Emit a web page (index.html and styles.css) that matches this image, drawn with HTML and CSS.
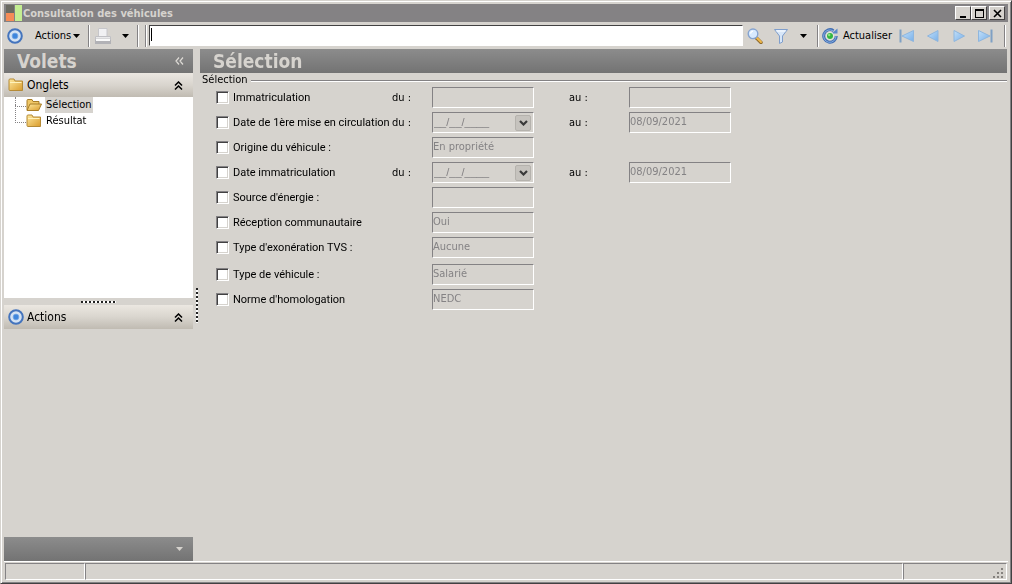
FILE: index.html
```html
<!DOCTYPE html>
<html lang="fr">
<head>
    <meta charset="UTF-8">
    <meta name="viewport" content="width=device-width, initial-scale=1.0">
    <title>Consultation des véhicules</title>
    <link rel="stylesheet" href="styles.css">
</head>
<body>
    <svg class="defs" aria-hidden="true">
        <defs>
            <linearGradient id="gold" x1="0" y1="0" x2="1" y2="1">
                <stop offset="0" stop-color="#ffeaa0"/>
                <stop offset="1" stop-color="#d99b2b"/>
            </linearGradient>
            <linearGradient id="blue" x1="0" y1="0" x2="1" y2="1">
                <stop offset="0" stop-color="#c4e0f8"/>
                <stop offset="1" stop-color="#78b0ea"/>
            </linearGradient>
            <linearGradient id="paper" x1="0" y1="0" x2="0" y2="1">
                <stop offset="0" stop-color="#fafafa"/>
                <stop offset="1" stop-color="#b4b4b8"/>
            </linearGradient>
            <symbol id="target" viewBox="0 0 16 16">
                <circle cx="8" cy="8" r="6.8" fill="#d5e3f3" stroke="#4474bd" stroke-width="2"/>
                <circle cx="8" cy="8" r="2.9" fill="#3f86dc" stroke="#79aae5" stroke-width=".8"/>
            </symbol>
            <symbol id="folder" viewBox="0 0 16 16">
                <path d="M1 3q0-1 1-1h4l1 2h7.500v9.500h-12.500q-1 0-1-1z" fill="url(#gold)" stroke="#b58a35"/>
                <path d="M2 5.500h11.500" stroke="#fff3bd"/>
            </symbol>
            <symbol id="folder-open" viewBox="0 0 16 16">
                <path d="M1 13V3.500q0-1 1-1h4l1 2h6v3" fill="#efc767" stroke="#a87d27"/>
                <path d="M1 13.500l3-6.500h11.500l-3 6.500z" fill="url(#gold)" stroke="#a87d27"/>
            </symbol>
            <symbol id="chevrons" viewBox="0 0 9 9">
                <path d="M1 4.500l3.500-3.500 3.500 3.500M1 8.500l3.500-3.500 3.500 3.500" fill="none" stroke="#000" stroke-width="1.500"/>
            </symbol>
            <symbol id="caret" viewBox="0 0 7 4">
                <path d="M0 0h7l-3.500 4z" fill="currentColor"/>
            </symbol>
            <symbol id="prev" viewBox="0 0 16 16">
                <path d="M13 2.500v11l-10.500-5.500z" fill="url(#blue)" stroke="#8fb6de"/>
            </symbol>
            <symbol id="next" viewBox="0 0 16 16">
                <path d="M3 2.500v11l10.500-5.500z" fill="url(#blue)" stroke="#8fb6de"/>
            </symbol>
            <symbol id="first" viewBox="0 0 16 16">
                <path d="M14.500 2.500v11l-11.500-5.500z" fill="url(#blue)" stroke="#8fb6de"/>
                <path d="M1.500 1.500v13" stroke="#7fa0c4" stroke-width="2"/>
            </symbol>
            <symbol id="last" viewBox="0 0 16 16">
                <path d="M1.500 2.500v11l11.500-5.500z" fill="url(#blue)" stroke="#8fb6de"/>
                <path d="M14.500 1.500v13" stroke="#7fa0c4" stroke-width="2"/>
            </symbol>
        </defs>
    </svg>

    <div class="window">
        <header class="titlebar">
            <svg class="logo" viewBox="0 0 16 16" aria-hidden="true">
                <path d="M0 0h8v8h-8z" fill="#6b6b62"/>
                <path d="M0 8h8v8h-8z" fill="#f58c57"/>
                <path d="M9 0h7v16h-7z" fill="#c4ee92"/>
            </svg>
            <h1 class="title">Consultation des véhicules</h1>
            <div class="window-buttons">
                <button class="win-btn" aria-label="Réduire">
                    <svg viewBox="0 0 11 9"><path d="M2 7h6v2h-6z"/></svg>
                </button>
                <button class="win-btn" aria-label="Agrandir">
                    <svg viewBox="0 0 11 9"><path d="M1 0h9v9h-9zM2 2v6h7v-6z" fill-rule="evenodd"/></svg>
                </button>
                <button class="win-btn close" aria-label="Fermer">
                    <svg viewBox="0 0 11 9"><path d="M2 1l7 7M9 1l-7 7" stroke="#000" stroke-width="1.600"/></svg>
                </button>
            </div>
        </header>

        <div class="toolbar">
            <svg class="icon" aria-hidden="true"><use href="#target"/></svg>
            <button class="tool actions">Actions<svg class="caret" aria-hidden="true"><use href="#caret"/></svg></button>
            <span class="sep"></span>
            <button class="tool printer" aria-label="Imprimer">
                <svg class="icon-print" viewBox="0 0 18 18">
                    <path d="M4.500 1.500h8.500v8h-8.500z" fill="#f1f1f3" stroke="#c6c6ca"/>
                    <path d="M1.500 9.500h15v4h-15z" fill="url(#paper)" stroke="#c0c0c4"/>
                    <path d="M1 13h16v4h-16z" fill="#b2b2b6"/>
                    <path d="M2 12h14v2h-14z" fill="#fafafa"/>
                </svg>
            </button>
            <button class="tool" aria-label="Options d'impression"><svg class="caret" aria-hidden="true"><use href="#caret"/></svg></button>
            <span class="sep before-search"></span>
            <span class="sep"></span>
            <input class="search" type="text" aria-label="Rechercher" autofocus>
            <button class="tool" aria-label="Rechercher">
                <svg class="icon" viewBox="0 0 16 16">
                    <path d="M9.500 10l4.500 4.500" stroke="#8f6a2c" stroke-width="3.400" stroke-linecap="round"/>
                    <path d="M10 10l4 4" stroke="#f0b94c" stroke-width="2" stroke-linecap="round"/>
                    <circle cx="6" cy="5.800" r="4.800" fill="#d8eafe" stroke="#85a3d0" stroke-width="1.400"/>
                    <path d="M3.500 5.500q.5-2 2.500-2.300" fill="none" stroke="#fff" stroke-width="1.300"/>
                </svg>
            </button>
            <button class="tool filter" aria-label="Filtrer">
                <svg class="icon" viewBox="0 0 16 16">
                    <path d="M1.500 1.500h13l-5 6.500v6l-3 1.500v-7.500z" fill="#d7e6f8" stroke="#7f9ecc"/>
                    <path d="M3.500 3h9" stroke="#fff"/>
                </svg>
            </button>
            <button class="tool filter-menu" aria-label="Options du filtre"><svg class="caret" aria-hidden="true"><use href="#caret"/></svg></button>
            <span class="sep"></span>
            <button class="tool refresh">
                <svg class="icon" viewBox="0 0 16 16" aria-hidden="true">
                    <path d="M11.500 2.700a6.300 6.300 0 1 0 2.800 5.300" fill="none" stroke="#4470b4" stroke-width="3"/>
                    <path d="M11.300 3a6.200 6.200 0 1 0 2.700 5" fill="none" stroke="#86addf"/>
                    <path d="M9.500 5.500h6v-5z" fill="#5b87c8"/>
                    <circle cx="8" cy="8" r="3.800" fill="#e3efe4"/>
                    <circle cx="8" cy="8" r="3" fill="#33b540"/>
                    <circle cx="7.200" cy="7" r="1.200" fill="#92e287"/>
                </svg>
                Actualiser
            </button>
            <div class="nav">
                <button class="tool" aria-label="Premier"><svg class="icon"><use href="#first"/></svg></button>
                <button class="tool" aria-label="Précédent"><svg class="icon"><use href="#prev"/></svg></button>
                <button class="tool" aria-label="Suivant"><svg class="icon"><use href="#next"/></svg></button>
                <button class="tool" aria-label="Dernier"><svg class="icon"><use href="#last"/></svg></button>
            </div>
            <span class="sep"></span>
        </div>

        <div class="content">
            <aside class="sidebar">
                <div class="band">
                    <h2>Volets</h2>
                    <button class="band-btn" aria-label="Masquer les volets">
                        <svg width="9" height="8" viewBox="0 0 9 8"><path d="M4 .5l-3 3.500 3 3.500M8 .5l-3 3.500 3 3.500" fill="none" stroke="#dedbd6" stroke-width="1.200"/></svg>
                    </button>
                </div>
                <button class="panel-head">
                    <svg class="icon" aria-hidden="true"><use href="#folder"/></svg>
                    <span>Onglets</span>
                    <svg class="chevrons" aria-hidden="true"><use href="#chevrons"/></svg>
                </button>
                <ul class="tree">
                    <li><a href="#selection" class="selected"><svg class="icon" aria-hidden="true"><use href="#folder-open"/></svg><span>Sélection</span></a></li>
                    <li><a href="#resultat"><svg class="icon" aria-hidden="true"><use href="#folder"/></svg><span>Résultat</span></a></li>
                </ul>
                <div class="grip-row"><span class="grip"></span></div>
                <button class="panel-head">
                    <svg class="icon" aria-hidden="true"><use href="#target"/></svg>
                    <span>Actions</span>
                    <svg class="chevrons" aria-hidden="true"><use href="#chevrons"/></svg>
                </button>
                <div class="band bottom">
                    <button class="band-btn" aria-label="Autres volets"><svg class="caret" aria-hidden="true"><use href="#caret"/></svg></button>
                </div>
            </aside>

            <div class="splitter"><span class="grip vertical"></span></div>

            <main class="main" id="selection">
                <div class="band"><h2>Sélection</h2></div>
                <fieldset class="criteria">
                    <legend>Sélection</legend>
                    <div class="group">
                        <div class="row">
                            <label class="check"><input type="checkbox">Immatriculation</label>
                            <label for="immat-du">du :</label>
                            <input class="field" id="immat-du" type="text" disabled>
                            <label class="to" for="immat-au">au :</label>
                            <input class="field" id="immat-au" type="text" disabled>
                        </div>
                        <div class="row">
                            <label class="check"><input type="checkbox">Date de 1ère mise en circulation</label>
                            <label for="circ-du">du :</label>
                            <div class="field date">
                                <input id="circ-du" type="text" value="__/__/____" disabled>
                                <button class="drop" aria-label="Choisir une date"><svg viewBox="0 0 9 6"><path d="M1 1l3.500 3.500 3.500-3.500" fill="none" stroke="#3a3a3a" stroke-width="2.200"/></svg></button>
                            </div>
                            <label class="to" for="circ-au">au :</label>
                            <input class="field" id="circ-au" type="text" value="08/09/2021" disabled>
                        </div>
                        <div class="row">
                            <label class="check"><input type="checkbox">Origine du véhicule :</label>
                            <input class="field" type="text" value="En propriété" aria-label="Origine du véhicule" disabled>
                        </div>
                        <div class="row">
                            <label class="check"><input type="checkbox">Date immatriculation</label>
                            <label for="date-du">du :</label>
                            <div class="field date">
                                <input id="date-du" type="text" value="__/__/____" disabled>
                                <button class="drop" aria-label="Choisir une date"><svg viewBox="0 0 9 6"><path d="M1 1l3.500 3.500 3.500-3.500" fill="none" stroke="#3a3a3a" stroke-width="2.200"/></svg></button>
                            </div>
                            <label class="to" for="date-au">au :</label>
                            <input class="field" id="date-au" type="text" value="08/09/2021" disabled>
                        </div>
                        <div class="row">
                            <label class="check"><input type="checkbox">Source d'énergie :</label>
                            <input class="field" type="text" aria-label="Source d'énergie" disabled>
                        </div>
                        <div class="row">
                            <label class="check"><input type="checkbox">Réception communautaire</label>
                            <input class="field" type="text" value="Oui" aria-label="Réception communautaire" disabled>
                        </div>
                        <div class="row">
                            <label class="check"><input type="checkbox">Type d'exonération TVS :</label>
                            <input class="field" type="text" value="Aucune" aria-label="Type d'exonération TVS" disabled>
                        </div>
                    </div>
                    <div class="group">
                        <div class="row">
                            <label class="check"><input type="checkbox">Type de véhicule :</label>
                            <input class="field" type="text" value="Salarié" aria-label="Type de véhicule" disabled>
                        </div>
                        <div class="row">
                            <label class="check"><input type="checkbox">Norme d'homologation</label>
                            <input class="field" type="text" value="NEDC" aria-label="Norme d'homologation" disabled>
                        </div>
                    </div>
                </fieldset>
            </main>
        </div>

        <footer class="status">
            <span></span>
            <span></span>
            <span class="corner">
                <svg width="11" height="11" viewBox="0 0 11 11" aria-hidden="true">
                    <path d="M9 1h2v2h-2zM5 5h2v2h-2zM9 5h2v2h-2zM1 9h2v2h-2zM5 9h2v2h-2zM9 9h2v2h-2z" fill="#85827e"/>
                </svg>
            </span>
        </footer>
    </div>
</body>
</html>
```
FILE: styles.css
```css
* {
    box-sizing: border-box;
}
body {
    margin: 0;
    background-color: #d6d3ce;
    font-family: "DejaVu Sans Condensed", Tahoma, sans-serif;
    font-size: 11px;
    color: #000;
}
button, input {
    font: inherit;
    color: inherit;
}
button {
    padding: 0;
    border: none;
    background: none;
}
svg {
    display: block;
    flex: none;
}
h1, h2 {
    margin: 0;
    font-weight: bold;
}
.defs {
    position: absolute;
    width: 0;
    height: 0;
}
.icon {
    width: 16px;
    height: 16px;
}
.caret {
    width: 7px;
    height: 4px;
}

.window {
    display: flex;
    flex-direction: column;
    min-height: 100vh;
    padding: 3px 3px 2px 3px;
    border: 1px solid #d6d3ce;
    border-right-color: #424142;
    border-bottom-color: #424142;
    box-shadow: inset 1px 1px #fff, inset -1px -1px #848284;
}

/* title bar */
.titlebar {
    display: flex;
    align-items: center;
    height: 18px;
    padding: 0 3px 0 2px;
    background-color: #848284;
}
.logo {
    width: 16px;
    height: 16px;
}
.title {
    flex: 1;
    padding-left: 1px;
    font-size: 11px;
    color: #d6d3ce;
}
.window-buttons {
    display: flex;
}
.win-btn {
    display: flex;
    align-items: center;
    justify-content: center;
    width: 16px;
    height: 14px;
    background-color: #d6d3ce;
    border: 1px solid;
    border-color: #fff #424142 #424142 #fff;
}
.win-btn svg {
    width: 11px;
    height: 9px;
}
.close {
    margin-left: 2px;
}

/* toolbar */
.toolbar {
    display: flex;
    align-items: center;
    height: 27px;
    padding: 0 2px 0 3px;
}
.tool {
    display: flex;
    align-items: center;
}
.actions {
    gap: 2px;
    margin: 0 8px 0 12px;
}
.sep {
    width: 2px;
    height: 22px;
    border-left: 1px solid #848284;
    border-right: 1px solid #fff;
}
.printer {
    margin: 0 10px 0 4px;
}
.icon-print {
    width: 18px;
    height: 18px;
}
.before-search {
    margin: 0 6px 0 8px;
}
.search {
    flex: 1;
    min-width: 0;
    height: 21px;
    margin: 0 4px 0 2px;
    padding: 0 2px;
    border: 1px solid;
    border-color: #424142 #fff #fff #424142;
    /* text cursor that does not blink */
    background: #fff linear-gradient(#000, #000) 1px 2px / 1px 13px no-repeat;
    caret-color: transparent;
    outline: none;
}
.filter {
    margin: 0 11px 0 10px;
}
.filter-menu {
    margin-right: 10px;
}
.refresh {
    gap: 5px;
    margin: 0 7px 0 3px;
}
.nav {
    display: flex;
    gap: 10px;
    margin-right: 11px;
}

/* side panels */
.content {
    flex: 1;
    display: flex;
    margin-right: 1px;
}
.sidebar {
    display: flex;
    flex-direction: column;
    width: 189px;
}
.band {
    display: flex;
    align-items: center;
    justify-content: space-between;
    height: 24px;
    padding: 0 9px 0 13px;
    background: linear-gradient(#8c8c8c, #737373);
    color: #d6d3ce;
}
.band h2 {
    font-size: 19px;
}
.bottom {
    justify-content: flex-end;
    margin-top: auto;
    padding-right: 10px;
}
.panel-head {
    display: flex;
    align-items: center;
    gap: 3px;
    height: 24px;
    padding: 0 10px 0 4px;
    background: linear-gradient(#ebe7e1, #d9d5ce 50%, #c0bbb2);
    font-size: 12px;
}
.chevrons {
    width: 9px;
    height: 9px;
    margin-left: auto;
}
.tree {
    height: 201px;
    margin: 0;
    padding: 0 0 0 11px;
    background-color: #fff;
    list-style: none;
}
.tree li {
    display: flex;
    align-items: center;
    height: 16px;
}
.tree li::before {
    content: "";
    align-self: flex-start;
    width: 10px;
    height: 9px;
    border-left: 1px dotted #848284;
    border-bottom: 1px dotted #848284;
}
.tree li + li::before {
    height: 17px;
    margin-top: -8px;
}
.tree a {
    display: flex;
    align-items: center;
    gap: 3px;
    color: #000;
    text-decoration: none;
}
.tree span {
    padding: 0 1px;
    line-height: 16px;
}
.tree .selected span {
    background-color: #d6d3ce;
}
.grip-row {
    display: flex;
    align-items: center;
    justify-content: center;
    height: 7px;
}
.grip {
    width: 35px;
    height: 2px;
    background: repeating-linear-gradient(90deg, #222 0 2px, #fff 2px 4px);
}
.splitter {
    display: flex;
    align-items: center;
    justify-content: center;
    width: 7px;
}
.vertical {
    width: 2px;
    height: 35px;
    background: repeating-linear-gradient(#222 0 2px, #fff 2px 4px);
}

/* selection criteria */
.main {
    flex: 1;
    min-width: 0;
}
.criteria {
    margin: 0;
    padding: 0 0 0 16px;
    border: none;
    border-top: 1px solid #848284;
    box-shadow: inset 0 1px #fff;
}
.criteria legend {
    margin-left: -16px;
    padding: 0 3px 0 2px;
    background-color: #d6d3ce;
    line-height: 14px;
}
.group:first-of-type {
    margin-top: -2px;
}
.group + .group {
    padding-top: 2px;
}
.row {
    display: grid;
    grid-template-columns: 176px 40px 102px 35px 60px 102px;
    align-items: center;
    height: 25px;
}
.row .field {
    grid-column: 3;
}
.row .to {
    grid-column: 4 / 6;
    padding-left: 35px;
}
.row .to + .field {
    grid-column: 6;
}
.check {
    display: flex;
    align-items: center;
    gap: 4px;
    font-family: Roboto, Tahoma, sans-serif;
    white-space: nowrap;
}
.check input {
    appearance: none;
    flex: none;
    width: 13px;
    height: 13px;
    margin: 0;
    background-color: #fff;
    border: 1px solid;
    border-color: #848284 #fff #fff #848284;
    box-shadow: inset 1px 1px #424142, inset -1px -1px #d6d3ce;
}
.check input:checked {
    background-color: #424142;
}
.field {
    width: 102px;
    height: 21px;
    padding: 0 1px 2px 0;
    border: 1px solid;
    border-color: #848284 #fff #fff #848284;
    background-color: #d6d3ce;
    color: #848284;
}
.date {
    display: flex;
    align-items: center;
    padding: 0 2px 0 1px;
}
.date input {
    flex: 1;
    min-width: 0;
    padding: 0 0 2px;
    border: none;
    background: none;
    font-family: "Liberation Sans", Arial, sans-serif;
}
.drop {
    display: flex;
    align-items: center;
    justify-content: center;
    width: 16px;
    height: 16px;
    border: 1px solid #b5b2ad;
    border-radius: 2px;
    background-color: #c6c3be;
}
.drop svg {
    width: 9px;
    height: 6px;
}

/* status bar */
.status {
    display: grid;
    grid-template-columns: 80px 1fr 104px;
    height: 20px;
    padding: 1px 1px 1px 1px;
    border-top: 1px solid #fff;
}
.status span {
    border: 1px solid;
    border-color: #848284 #fff #fff #848284;
}
.corner {
    display: flex;
    align-items: flex-end;
    justify-content: flex-end;
    padding: 0 3px 1px 0;
}
```
